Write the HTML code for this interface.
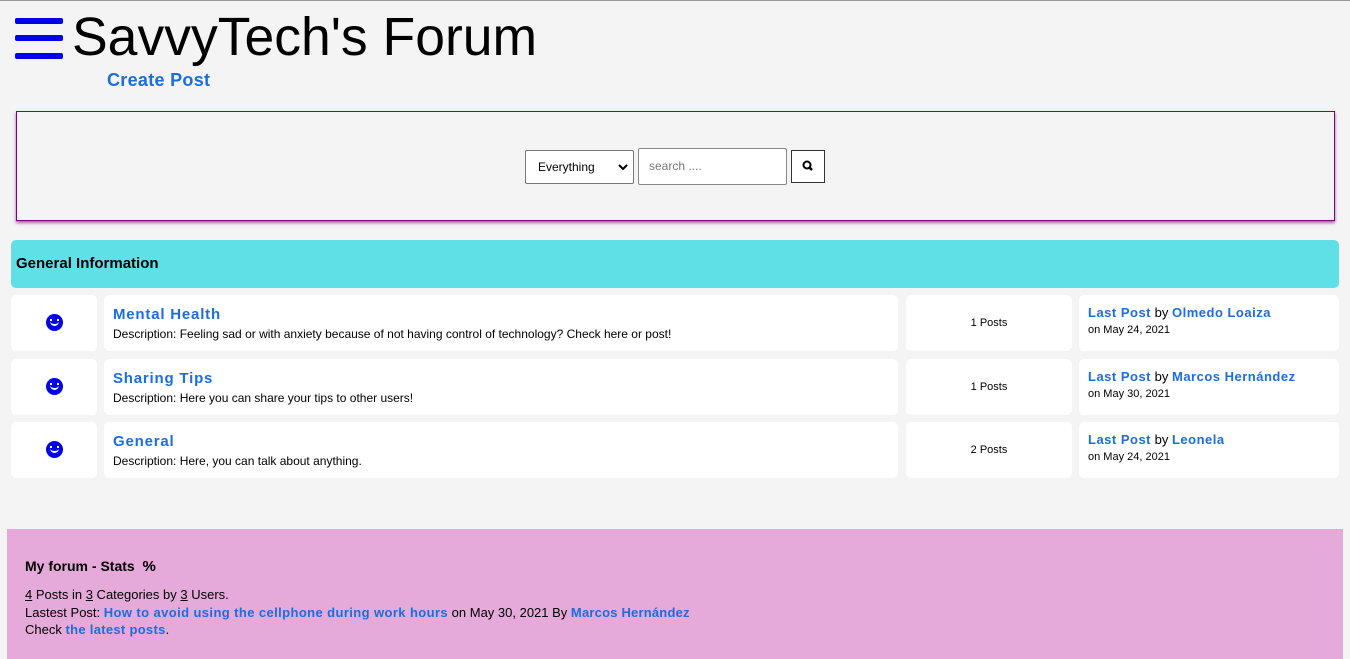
<!DOCTYPE html>
<html><head><meta charset="utf-8"><style>
body{margin:0;width:1350px;height:653px;background:#f4f4f4;font-family:"Liberation Sans",Arial,sans-serif;position:relative;overflow:hidden}
.top{position:absolute;left:0;top:0;width:1350px;height:1px;background:#999}
.a{position:absolute}
.card{position:absolute;background:#fff;border-radius:5px}
.lk{color:#1a6ee0;font-weight:bold;letter-spacing:.8px}
.bar{position:absolute;left:15px;width:48px;height:6px;background:#0000ee;border-radius:2px}
.sm{font-size:12px}
.ic{position:absolute;left:46px;width:17px;height:17px;border-radius:50%;background:#0000ee}
.ic:before{content:"";position:absolute;left:4px;top:5px;width:2px;height:2px;background:#fff;box-shadow:7px 0 0 #fff}
.ic:after{content:"";position:absolute;left:4px;top:7px;width:9px;height:5px;border-bottom:2px solid #fff;border-radius:0 0 6px 6px;box-sizing:border-box}
</style></head><body>
<div class="top"></div>
<div class="bar" style="top:18px"></div><div class="bar" style="top:35px"></div><div class="bar" style="top:53px"></div>
<div class="a" style="left:72px;top:7px;font-size:53.5px;line-height:62px;color:#000">SavvyTech's Forum</div>
<div class="a lk" style="left:107px;top:70px;font-size:18px;letter-spacing:.3px">Create Post</div>
<div class="a" style="left:16px;top:111px;width:1319px;height:110px;border:1px solid #800080;box-sizing:border-box;box-shadow:0 2px 3px #a060a0"></div>
<div class="a" style="left:525px;top:150px;width:109px;height:34px;border:1px solid #777;border-radius:2px;background:#fff;box-sizing:border-box;font-size:12px;line-height:32px;padding-left:12px">Everything<svg class="a" style="right:5px;top:12px" width="10" height="8"><path d="M1 2l4 4 4-4" fill="none" stroke="#000" stroke-width="2"/></svg></div>
<div class="a" style="left:638px;top:148px;width:149px;height:37px;border:1px solid #888;border-radius:2px;background:#fff;box-sizing:border-box;font-size:12px;line-height:35px;padding-left:10px;color:#777">search ....</div>
<div class="a" style="left:791px;top:150px;width:34px;height:33px;border:1px solid #333;background:#fff;box-sizing:border-box">
<svg width="32" height="31" viewBox="0 0 32 31"><circle cx="15" cy="14" r="3.5" fill="none" stroke="#000" stroke-width="2"/><line x1="17.5" y1="16.5" x2="20" y2="19" stroke="#000" stroke-width="2.5"/></svg></div>
<div class="a" style="left:11px;top:240px;width:1328px;height:48px;background:#5ee0e6;border-radius:5px;font-weight:bold;font-size:15px;line-height:48px;padding-left:5px;box-sizing:border-box">General Information</div>

<div class="card" style="left:11px;top:295px;width:86px;height:56px"></div><div class="ic" style="top:314px"></div>
<div class="card" style="left:104px;top:295px;width:794px;height:56px"><div class="a lk" style="left:9px;top:11px;font-size:15px">Mental Health</div><div class="a sm" style="left:9px;top:32px">Description: Feeling sad or with anxiety because of not having control of technology? Check here or post!</div></div>
<div class="card" style="left:906px;top:295px;width:166px;height:56px;font-size:11px;text-align:center;line-height:56px">1 Posts</div>
<div class="card" style="left:1079px;top:295px;width:260px;height:56px"><div class="a" style="left:9px;top:10px;font-size:13px"><span class="lk" style="letter-spacing:.5px">Last Post</span> by <span class="lk" style="letter-spacing:.5px">Olmedo Loaiza</span></div><div class="a" style="left:9px;top:29px;font-size:11px">on May 24, 2021</div></div>

<div class="card" style="left:11px;top:359px;width:86px;height:56px"></div><div class="ic" style="top:378px"></div>
<div class="card" style="left:104px;top:359px;width:794px;height:56px"><div class="a lk" style="left:9px;top:11px;font-size:15px">Sharing Tips</div><div class="a sm" style="left:9px;top:32px">Description: Here you can share your tips to other users!</div></div>
<div class="card" style="left:906px;top:359px;width:166px;height:56px;font-size:11px;text-align:center;line-height:56px">1 Posts</div>
<div class="card" style="left:1079px;top:359px;width:260px;height:56px"><div class="a" style="left:9px;top:10px;font-size:13px"><span class="lk" style="letter-spacing:.5px">Last Post</span> by <span class="lk" style="letter-spacing:.5px">Marcos Hernández</span></div><div class="a" style="left:9px;top:29px;font-size:11px">on May 30, 2021</div></div>

<div class="card" style="left:11px;top:422px;width:86px;height:56px"></div><div class="ic" style="top:441px"></div>
<div class="card" style="left:104px;top:422px;width:794px;height:56px"><div class="a lk" style="left:9px;top:11px;font-size:15px">General</div><div class="a sm" style="left:9px;top:32px">Description: Here, you can talk about anything.</div></div>
<div class="card" style="left:906px;top:422px;width:166px;height:56px;font-size:11px;text-align:center;line-height:56px">2 Posts</div>
<div class="card" style="left:1079px;top:422px;width:260px;height:56px"><div class="a" style="left:9px;top:10px;font-size:13px"><span class="lk" style="letter-spacing:.5px">Last Post</span> by <span class="lk" style="letter-spacing:.5px">Leonela</span></div><div class="a" style="left:9px;top:29px;font-size:11px">on May 24, 2021</div></div>

<div class="a" style="left:7px;top:529px;width:1336px;height:130px;background:#e5aad9"></div>
<div class="a" style="left:25px;top:558px;font-size:14px;font-weight:bold">My forum - Stats &nbsp;<span style="font-size:15px">%</span></div>
<div class="a" style="left:25px;top:586px;font-size:13px;line-height:17.5px"><u>4</u> Posts in <u>3</u> Categories by <u>3</u> Users.<br>Lastest Post: <span class="lk" style="letter-spacing:.4px">How to avoid using the cellphone during work hours</span> on May 30, 2021 By <span style="color:#1a6ee0;font-weight:bold;letter-spacing:.2px">Marcos Hernández</span><br>Check <span class="lk" style="letter-spacing:.3px">the latest posts</span>.</div>
</body></html>
